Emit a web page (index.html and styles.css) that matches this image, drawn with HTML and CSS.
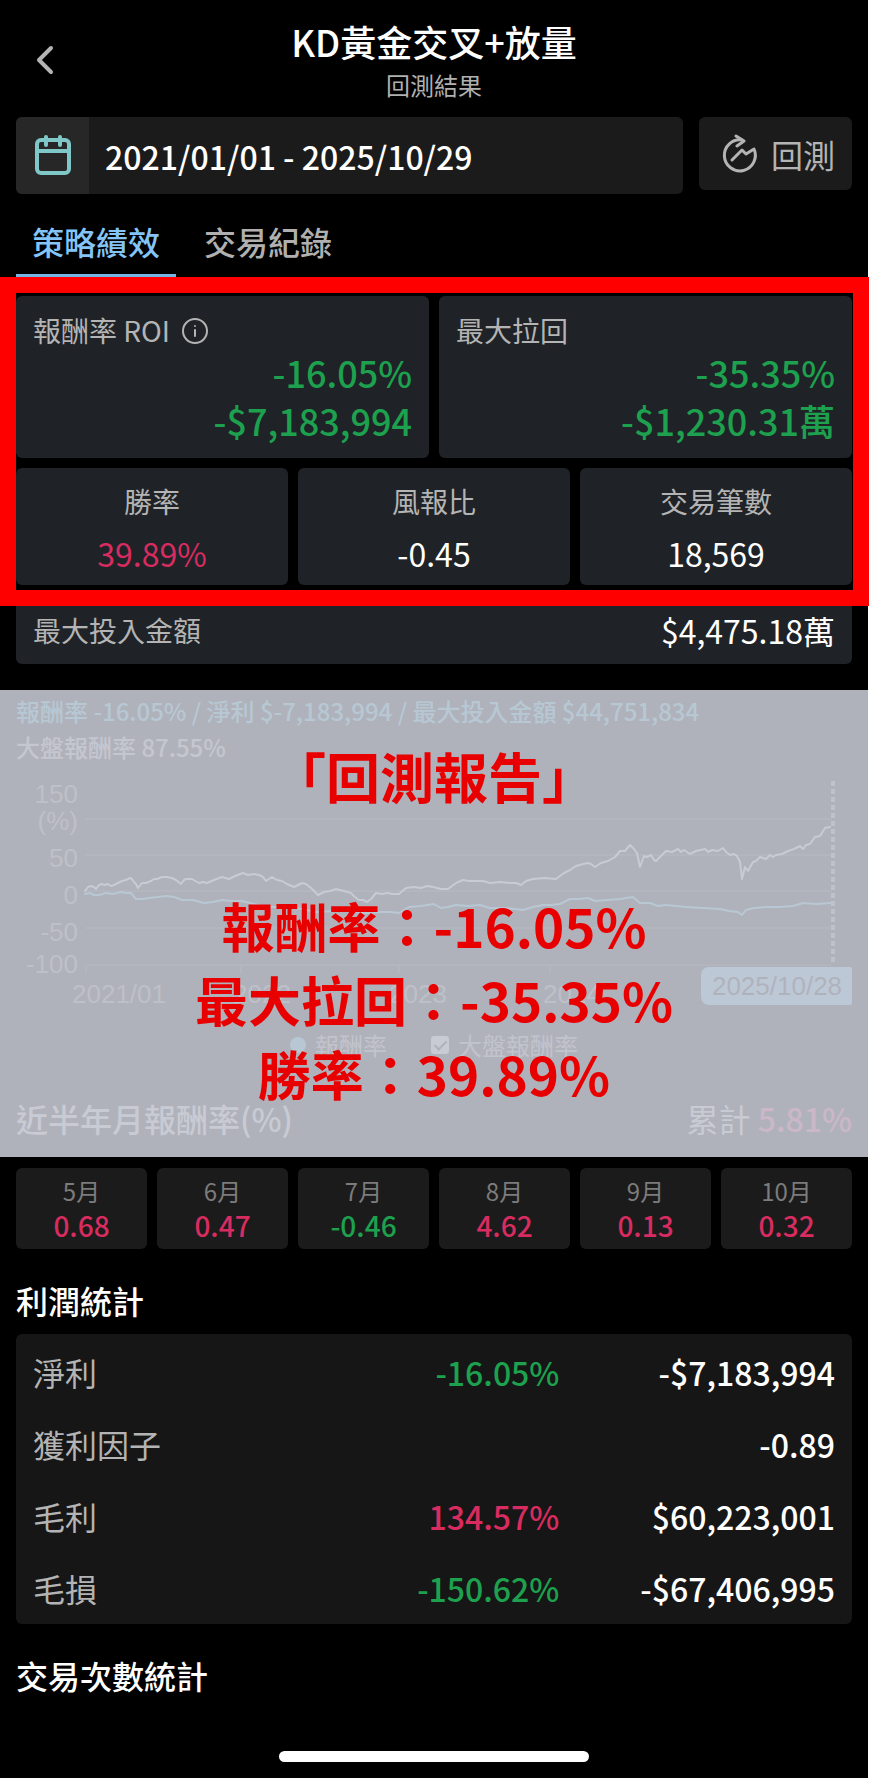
FILE: index.html
```html
<!DOCTYPE html>
<html lang="zh-Hant">
  <head>
    <meta charset="UTF-8" />
    <meta name="viewport" content="width=device-width, initial-scale=1.0" />
    <title>KD黃金交叉+放量 回測結果</title>
    <link rel="stylesheet" href="styles.css">
  </head>
  <body>
    <main class="screen">
      <header class="header">
        <button type="button" class="back" aria-label="返回">
          <svg width="20" height="32" viewBox="0 0 20 32">
            <path d="M16 4 4 16l12 12" />
          </svg>
        </button>
        <div class="heading">
          <h1>KD黃金交叉+放量</h1>
          <p>回測結果</p>
        </div>
      </header>

      <div class="toolbar">
        <div class="date-field">
          <label for="range" aria-label="回測區間">
            <svg width="36" height="42" viewBox="0 0 36 42">
              <rect x="2" y="5" width="32" height="33" rx="4" />
              <path d="M2 16h32M11 2v8M25 2v8" />
            </svg>
          </label>
          <input type="text" id="range" name="range" value="2021/01/01 - 2025/10/29" />
        </div>
        <button type="button" class="run">
          <svg width="38" height="40" viewBox="0 0 38 40">
            <path d="M21 6A15.500 15.500 0 1 0 33 15L25 20l-4-4L11 26" />
            <path d="M15 2l8 5-7 5" />
          </svg>
          回測
        </button>
      </div>

      <nav class="tabs">
        <a href="#performance" class="active">策略績效</a>
        <a href="#trades">交易紀錄</a>
      </nav>

      <div class="metrics">
        <div class="cards two">
          <div class="card">
            <div class="label">
              報酬率 ROI
              <svg width="26" height="26" viewBox="0 0 26 26">
                <circle cx="13" cy="13" r="12" />
                <path d="M13 12v6M13 8v0" />
              </svg>
            </div>
            <div class="amount down">-16.05%</div>
            <div class="amount down">-$7,183,994</div>
          </div>
          <div class="card">
            <div class="label">最大拉回</div>
            <div class="amount down">-35.35%</div>
            <div class="amount down">-$1,230.31萬</div>
          </div>
        </div>
        <div class="cards three">
          <div class="card">
            <div class="label">勝率</div>
            <div class="value up">39.89%</div>
          </div>
          <div class="card">
            <div class="label">風報比</div>
            <div class="value">-0.45</div>
          </div>
          <div class="card">
            <div class="label">交易筆數</div>
            <div class="value">18,569</div>
          </div>
        </div>
      </div>
      <div class="card invested">
        <div class="label">最大投入金額</div>
        <div class="value">$4,475.18萬</div>
      </div>

      <section class="report">
        <p class="summary roi">報酬率 -16.05% / 淨利 $-7,183,994 / 最大投入金額 $44,751,834</p>
        <p class="summary">大盤報酬率 87.55%</p>

        <svg class="chart" viewBox="0 0 836 245">
          <path class="grid" d="M70 54H815M70 90H815M70 126H815M70 163H815M70 200H815M70 200v8M225 200v8M383 200v8M534 200v8" />
          <g class="y-axis">
            <text x="62" y="38">150</text>
            <text x="62" y="65">(%)</text>
            <text x="62" y="102">50</text>
            <text x="62" y="139">0</text>
            <text x="62" y="176">-50</text>
            <text x="62" y="208">-100</text>
          </g>
          <g class="x-axis">
            <text x="103" y="238">2021/01</text>
            <text x="246" y="238">2022</text>
            <text x="402" y="238">2023</text>
            <text x="556" y="238">2024</text>
          </g>
          <polyline class="line market" points="69,126 72,122 75,121 78,122 80,124 83,120 86,119 89,120 92,119 95,121 98,120 102,118 106,116 110,115 114,113 116,114 118,117 120,119 122,123 126,118 130,118 135,116 138,114 141,114 146,112 151,112 156,113 160,115 165,119 168,115 170,114 176,114 183,118 187,117 191,118 198,115 206,112 213,114 219,111 227,108 232,110 238,109 243,110 247,112 250,116 256,112 261,115 266,116 271,119 278,122 286,118 290,119 295,123 299,127 302,130 308,127 314,126 320,124 328,126 335,128 339,132 343,135 347,135 351,137 355,134 360,128 366,129 371,128 377,129 383,129 390,123 398,122 405,123 411,121 417,122 425,124 432,124 440,118 447,115 453,116 460,116 467,116 474,118 484,117 495,118 500,118 505,120 510,116 517,114 528,113 540,114 548,108 554,105 560,101 567,99 572,98 575,99 579,102 585,98 592,96 599,92 604,86 609,86 614,80 618,84 621,88 624,102 628,91 631,92 635,90 638,95 640,96 644,92 650,86 656,87 662,84 665,87 668,85 674,89 680,86 689,84 692,87 696,85 702,86 707,83 710,87 714,90 718,89 721,91 724,97 726,114 729,102 732,106 737,97 740,96 744,92 750,94 754,90 757,92 760,90 766,89 772,86 778,84 784,81 787,84 790,80 794,79 799,72 804,71 809,63 814,62" />
          <polyline class="line strategy" points="69,129 74,128 78,130 83,130 90,128 97,129 105,127 110,128 115,128 120,134 126,134 133,133 142,132 150,131 158,132 166,135 177,135 188,138 197,137 206,135 216,136 226,136 238,139 250,142 261,142 273,142 286,144 300,147 318,146 336,146 350,148 366,147 374,147 383,148 393,142 405,141 418,139 425,143 432,142 440,140 452,141 464,140 474,143 490,143 507,145 517,142 527,140 535,140 544,139 554,134 563,134 572,133 579,136 591,135 604,134 617,132 624,138 634,138 642,141 650,140 660,141 670,142 687,143 704,144 713,146 722,147 726,150 730,145 738,143 750,142 763,142 777,141 787,138 800,139 815,138" />
          <path class="cursor" d="M817 16V199" />
          <path class="tag" d="M693 202H834a2 2 0 0 1 2 2V238a2 2 0 0 1-2 2H693a8 8 0 0 1-8-8V210a8 8 0 0 1 8-8z" />
          <text class="tag-text" x="761" y="230">2025/10/28</text>
        </svg>

        <div class="legend">
          <span class="legend-item"><i class="dot"></i>報酬率</span>
          <label class="legend-item"><input type="checkbox" checked />大盤報酬率</label>
        </div>

        <div class="months-title">
          <h2>近半年月報酬率(%)</h2>
          <div>累計 <b class="up">5.81%</b></div>
        </div>

        <div class="overlay">
          <p class="overlay-title">「回測報告」</p>
          <p>報酬率：-16.05%</p>
          <p>最大拉回：-35.35%</p>
          <p>勝率：39.89%</p>
        </div>
      </section>

      <div class="months">
        <div class="month"><span>5月</span><b class="up">0.68</b></div>
        <div class="month"><span>6月</span><b class="up">0.47</b></div>
        <div class="month"><span>7月</span><b class="down">-0.46</b></div>
        <div class="month"><span>8月</span><b class="up">4.62</b></div>
        <div class="month"><span>9月</span><b class="up">0.13</b></div>
        <div class="month"><span>10月</span><b class="up">0.32</b></div>
      </div>

      <h2 class="section-title">利潤統計</h2>
      <table class="stats">
        <tr>
          <th scope="row">淨利</th>
          <td class="down">-16.05%</td>
          <td>-$7,183,994</td>
        </tr>
        <tr>
          <th scope="row">獲利因子</th>
          <td></td>
          <td>-0.89</td>
        </tr>
        <tr>
          <th scope="row">毛利</th>
          <td class="up">134.57%</td>
          <td>$60,223,001</td>
        </tr>
        <tr>
          <th scope="row">毛損</th>
          <td class="down">-150.62%</td>
          <td>-$67,406,995</td>
        </tr>
      </table>

      <h2 class="section-title">交易次數統計</h2>
      <div class="home-bar"></div>
    </main>
  </body>
</html>
```

FILE: styles.css
```css
* {
  box-sizing: border-box;
}

body {
  margin: 0;
  background-color: #fff;
  font-family: "Noto Sans CJK TC", sans-serif;
}

h1,
h2,
p {
  margin: 0;
  font-weight: 500;
}

button,
input {
  font-family: inherit;
  border: 0;
  padding: 0;
  margin: 0;
}

svg {
  fill: none;
  stroke-linecap: round;
  stroke-linejoin: round;
}

.screen {
  min-height: 100vh;
  margin-right: 1px;
  padding: 0 16px 15px;
  background-color: #000;
  color: #fff;
}

.up {
  color: #d82c60;
}

.down {
  color: #1da14e;
}

/* header */
.header {
  display: grid;
  grid-template-columns: 56px 1fr 56px;
  align-items: center;
  padding: 19px 0 16px;
}

.back {
  justify-self: start;
  display: flex;
  padding-left: 19px;
  background: none;
}

.back svg {
  stroke: #b4b4b4;
  stroke-width: 4;
}

.heading {
  text-align: center;
}

.heading h1 {
  font-size: 36px;
  line-height: 44px;
}

.heading p {
  margin-top: 6px;
  font-size: 24px;
  line-height: 32px;
  font-weight: 400;
  color: #b0b0b0;
}

/* date range */
.toolbar {
  display: flex;
  align-items: flex-start;
  gap: 16px;
}

.date-field {
  flex: 1;
  display: flex;
  height: 77px;
  border-radius: 6px;
  background-color: #1b1b1b;
  overflow: hidden;
}

.date-field label {
  display: flex;
  align-items: center;
  justify-content: center;
  width: 73px;
  background-color: #272727;
}

.date-field svg {
  stroke: #80c8c8;
  stroke-width: 4;
}

.date-field input {
  flex: 1;
  min-width: 0;
  padding-left: 16px;
  background: none;
  color: #fff;
  font-size: 32px;
  font-weight: 500;
}

.run {
  display: flex;
  align-items: center;
  gap: 12px;
  height: 73px;
  padding: 0 17px 0 22px;
  border-radius: 6px;
  background-color: #1b1b1b;
  color: #b4b4b4;
  font-size: 32px;
}

.run svg {
  stroke: #b4b4b4;
  stroke-width: 3;
}

/* tabs */
.tabs {
  display: flex;
  gap: 12px;
  margin: 25px 0 18px;
}

.tabs a {
  padding: 0 16px 11px;
  border-bottom: 4px solid transparent;
  color: #b0b0b0;
  font-size: 32px;
  line-height: 44px;
  font-weight: 500;
  text-decoration: none;
}

.tabs a.active {
  color: #84c4f8;
  border-color: #76b4e8;
}

/* metric cards */
.metrics {
  position: relative;
}

/* red frame around the main metrics */
.metrics::after {
  content: "";
  position: absolute;
  inset: -19px -17px -21px -16px;
  border: 16px solid #f00;
  pointer-events: none;
}

.cards {
  display: grid;
  gap: 10px;
  margin-bottom: 10px;
}

.two {
  grid-template-columns: repeat(2, 1fr);
}

.three {
  grid-template-columns: repeat(3, 1fr);
}

.card {
  border-radius: 6px;
  background-color: #1f2327;
}

.two .card {
  padding: 16px 17px 14px;
}

.three .card {
  padding: 15px 0 10px;
  text-align: center;
}

.label {
  color: #b4b4b4;
  font-size: 28px;
  line-height: 36px;
}

.label svg {
  margin-left: 6px;
  vertical-align: -2px;
  stroke: #b4b4b4;
  stroke-width: 2;
}

.amount {
  font-size: 36px;
  line-height: 48px;
  font-weight: 500;
  text-align: right;
}

.value {
  font-size: 32px;
  line-height: 44px;
}

.three .value {
  margin-top: 12px;
}

.invested {
  display: flex;
  justify-content: space-between;
  align-items: center;
  padding: 13px 17px 12px;
}

/* report chart */
.report {
  position: relative;
  margin: 26px -16px 11px;
  padding: 3px 16px 17px;
}

.summary {
  font-size: 24px;
  line-height: 36px;
  color: #a8a8a8;
}

.summary.roi {
  color: #38b4c8;
}

.chart {
  display: block;
  width: 100%;
}

.chart text {
  fill: #707070;
  font-family: "Liberation Sans", Arial, sans-serif;
  font-size: 26px;
}

.grid {
  stroke: #202020;
  stroke-width: 2;
}

.y-axis {
  text-anchor: end;
}

.x-axis,
.tag-text {
  text-anchor: middle;
}

.line {
  stroke-width: 2;
}

.market {
  stroke: #c8c8c8;
}

.strategy {
  stroke: #38b4c8;
}

.cursor {
  stroke: #808080;
  stroke-width: 4;
  stroke-linecap: butt;
  stroke-dasharray: 5 3;
}

.tag {
  fill: #6cb0e0;
}

.chart .tag-text {
  fill: #000;
}

.legend {
  display: flex;
  justify-content: center;
  gap: 44px;
  margin-top: 17px;
  font-size: 24px;
  line-height: 36px;
  color: #909090;
}

.legend-item {
  display: flex;
  align-items: center;
  gap: 9px;
}

.dot {
  width: 16px;
  height: 16px;
  border-radius: 50%;
  background-color: #38b4c8;
}

.legend input {
  display: flex;
  justify-content: center;
  width: 18px;
  height: 18px;
  border-radius: 3px;
  background-color: #c8c8c8;
  appearance: none;
}

.legend input:checked::after {
  content: "";
  width: 5px;
  height: 10px;
  margin-top: 2px;
  border: solid #000;
  border-width: 0 2px 2px 0;
  transform: rotate(45deg);
}

.months-title {
  display: flex;
  justify-content: space-between;
  margin-top: 33px;
  color: #c8c8c8;
  font-size: 32px;
  line-height: 44px;
}

.months-title h2 {
  font-size: 32px;
}

.months-title b {
  font-weight: 500;
}

/* translucent sheet with the headline figures */
.overlay {
  position: absolute;
  inset: 0;
  padding-top: 49px;
  background-color: rgba(200, 203, 213, 0.88);
  color: #e80000;
  font-size: 53px;
  line-height: 74px;
  text-align: center;
}

.overlay p {
  font-weight: 700;
}

.overlay .overlay-title {
  margin-bottom: 75px;
  font-size: 54px;
}

/* monthly returns */
.months {
  display: grid;
  grid-template-columns: repeat(6, 1fr);
  gap: 10px;
}

.month {
  display: flex;
  flex-direction: column;
  padding: 7px 0 6px;
  border-radius: 6px;
  background-color: #1b1b1b;
  text-align: center;
}

.month span {
  color: #7c7c7c;
  font-size: 24px;
  line-height: 32px;
}

.month b {
  font-size: 28px;
  line-height: 36px;
  font-weight: 500;
}

/* profit table */
.section-title {
  margin: 29px 0 12px;
  font-size: 32px;
  line-height: 44px;
}

.stats {
  width: 100%;
  padding-top: 2px;
  border-spacing: 0;
  border-radius: 6px;
  background-color: #161616;
  font-size: 32px;
  line-height: 44px;
}

.stats th,
.stats td {
  padding: 14px 0;
  font-weight: 500;
  text-align: right;
}

.stats th {
  padding-left: 17px;
  color: #b4b4b4;
  font-weight: 400;
  text-align: left;
}

.stats td:last-child {
  width: 35%;
  padding-right: 17px;
}

.home-bar {
  width: 37%;
  height: 11px;
  margin: 54px auto 0;
  border-radius: 6px;
  background-color: #fff;
}
```
